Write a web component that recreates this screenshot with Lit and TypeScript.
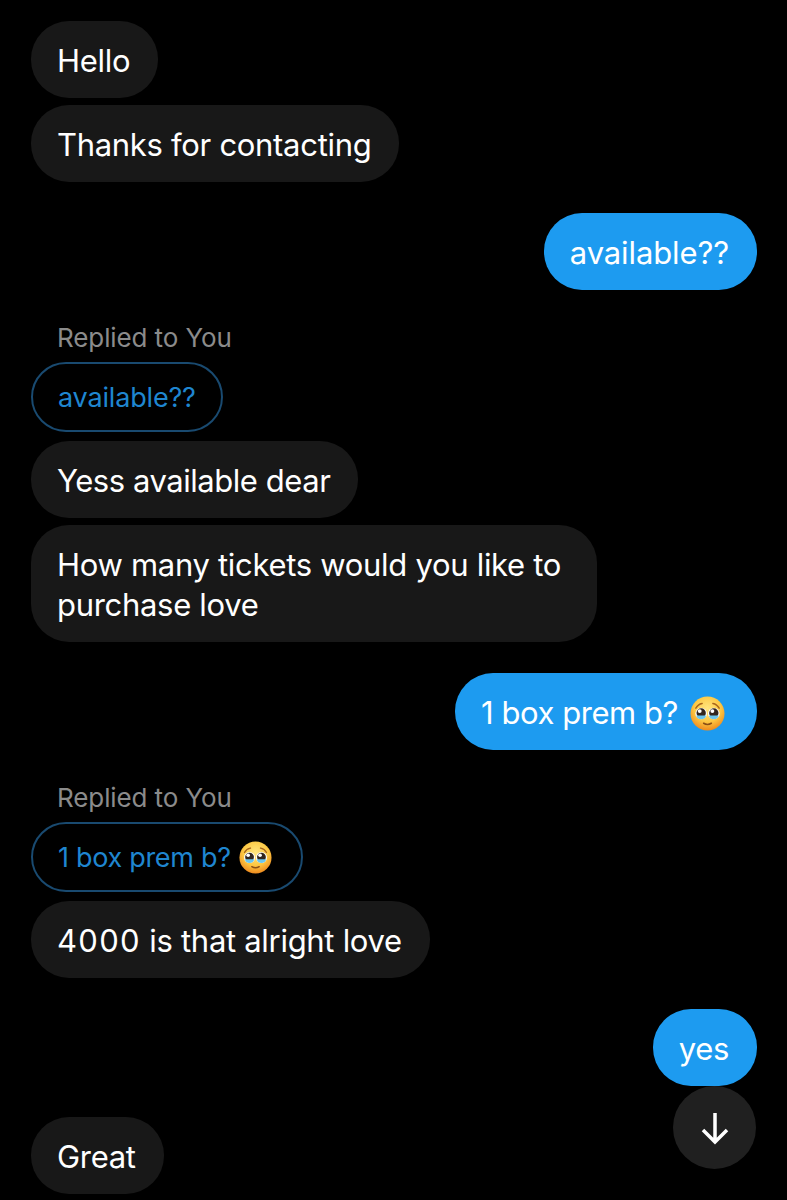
import { LitElement, html, css } from 'lit';
import { customElement } from 'lit/decorators.js';

// pleading face, used in the sent bubble and its quoted reply
const pleading = (size: number) => html`
    <svg class="emoji" width=${size} height=${size} viewBox="0 0 36 36">
        <defs>
            <radialGradient id="face" cx="50%" cy="35%" r="65%">
                <stop offset="0%" stop-color="#ffe680"></stop>
                <stop offset="60%" stop-color="#fdc843"></stop>
                <stop offset="100%" stop-color="#ee8a1e"></stop>
            </radialGradient>
        </defs>
        <circle cx="18" cy="18" r="17.500" fill="url(#face)"></circle>
        <path d="M6 12.500c1.500-2.800 3.700-4.300 6.500-4.800M30 12.500c-1.500-2.800-3.700-4.300-6.500-4.800" fill="none" stroke="#a8651a" stroke-width="1.500" stroke-linecap="round"></path>
        <circle cx="11.500" cy="18" r="6" fill="#fff"></circle>
        <circle cx="24.500" cy="18" r="6" fill="#fff"></circle>
        <circle cx="11.500" cy="17.500" r="4.800" fill="#33261e"></circle>
        <circle cx="24.500" cy="17.500" r="4.800" fill="#33261e"></circle>
        <circle cx="10" cy="15.500" r="2" fill="#fff"></circle>
        <circle cx="23" cy="15.500" r="2" fill="#fff"></circle>
        <path d="M6.500 20a5 4 0 0 0 10 0z" fill="#6cc6ee"></path>
        <path d="M19.500 20a5 4 0 0 0 10 0z" fill="#6cc6ee"></path>
        <path d="M14 28c2.500 1.600 5.500 1.600 8 0" fill="none" stroke="#8a4f16" stroke-width="1.600" stroke-linecap="round"></path>
    </svg>
`;

@customElement('app-root')
export class AppRoot extends LitElement {
    static styles = css`
        :host {
            display: block;
            position: relative;
            width: 787px;
            height: 1200px;
            overflow: hidden;
            background: #000;
            font-family: Inter, "Liberation Sans", sans-serif;
            color: #fff;
        }
        .thread {
            display: flex;
            flex-direction: column;
            padding: 21px 30px 0 31px;
        }
        .bubble {
            box-sizing: border-box;
            max-width: 566px;
            padding: 20px 28px 17px 26px;
            border-radius: 38px;
            font-size: 31px;
            line-height: 40px;
            letter-spacing: -0.3px;
            background: #181818;
            align-self: flex-start;
            display: flex;
            align-items: center;
        }
        .bubble.sent {
            background: #1d9bf0;
            align-self: flex-end;
        }
        .bubble.loose { letter-spacing: -0.1px; }
        .bubble.tight { letter-spacing: -0.45px; }
        .bubble .emoji {
            margin: 0 4px 0 12px;
        }
        .digits {
            letter-spacing: 1.300px;
            white-space: pre;
        }
        .gap-s { margin-top: 7px; }
        .gap-m { margin-top: 9px; }
        .gap-l { margin-top: 31px; }
        .replied {
            margin-top: 31px;
            font-size: 26px;
            line-height: 34px;
            letter-spacing: -0.1px;
            color: #8b8b8b;
            padding-left: 26px;
        }
        .quote {
            box-sizing: border-box;
            align-self: flex-start;
            display: flex;
            align-items: center;
            height: 70px;
            margin-top: 7px;
            padding: 0 25px;
            border: 2px solid #194a70;
            border-radius: 35px;
            font-size: 27px;
            letter-spacing: -0.17px;
            color: #1f86d0;
        }
        .quote.with-emoji {
            padding-right: 29px;
            letter-spacing: -0.3px;
        }
        .quote .emoji {
            margin-left: 8px;
            flex: none;
        }
        .jump {
            position: absolute;
            left: 673px;
            top: 1086px;
            width: 83px;
            height: 83px;
            border-radius: 50%;
            background: #202020;
            display: flex;
            align-items: center;
            justify-content: center;
        }
    `;

    render() {
        return html`
            <div class="thread">
                <div class="bubble">Hello</div>
                <div class="bubble gap-s">Thanks for contacting</div>
                <div class="bubble sent loose gap-l">available??</div>

                <div class="replied">Replied to You</div>
                <div class="quote">available??</div>
                <div class="bubble tight gap-m">Yess available dear</div>
                <div class="bubble gap-s">How many tickets would you like to purchase love</div>
                <div class="bubble sent tight gap-l">1 box prem b? ${pleading(35)}</div>

                <div class="replied">Replied to You</div>
                <div class="quote with-emoji">1 box prem b? ${pleading(33)}</div>
                <div class="bubble gap-m"><span><span class="digits">4000</span> is that alright love</span></div>
                <div class="bubble sent gap-l">yes</div>
                <div class="bubble gap-l">Great</div>
            </div>
            <div class="jump">
                <svg width="30" height="34" viewBox="0 0 30 34" fill="none" stroke="#fff" stroke-width="3.500">
                    <path d="M15 2v29M3 19l12 12 12-12"></path>
                </svg>
            </div>
        `;
    }
}
